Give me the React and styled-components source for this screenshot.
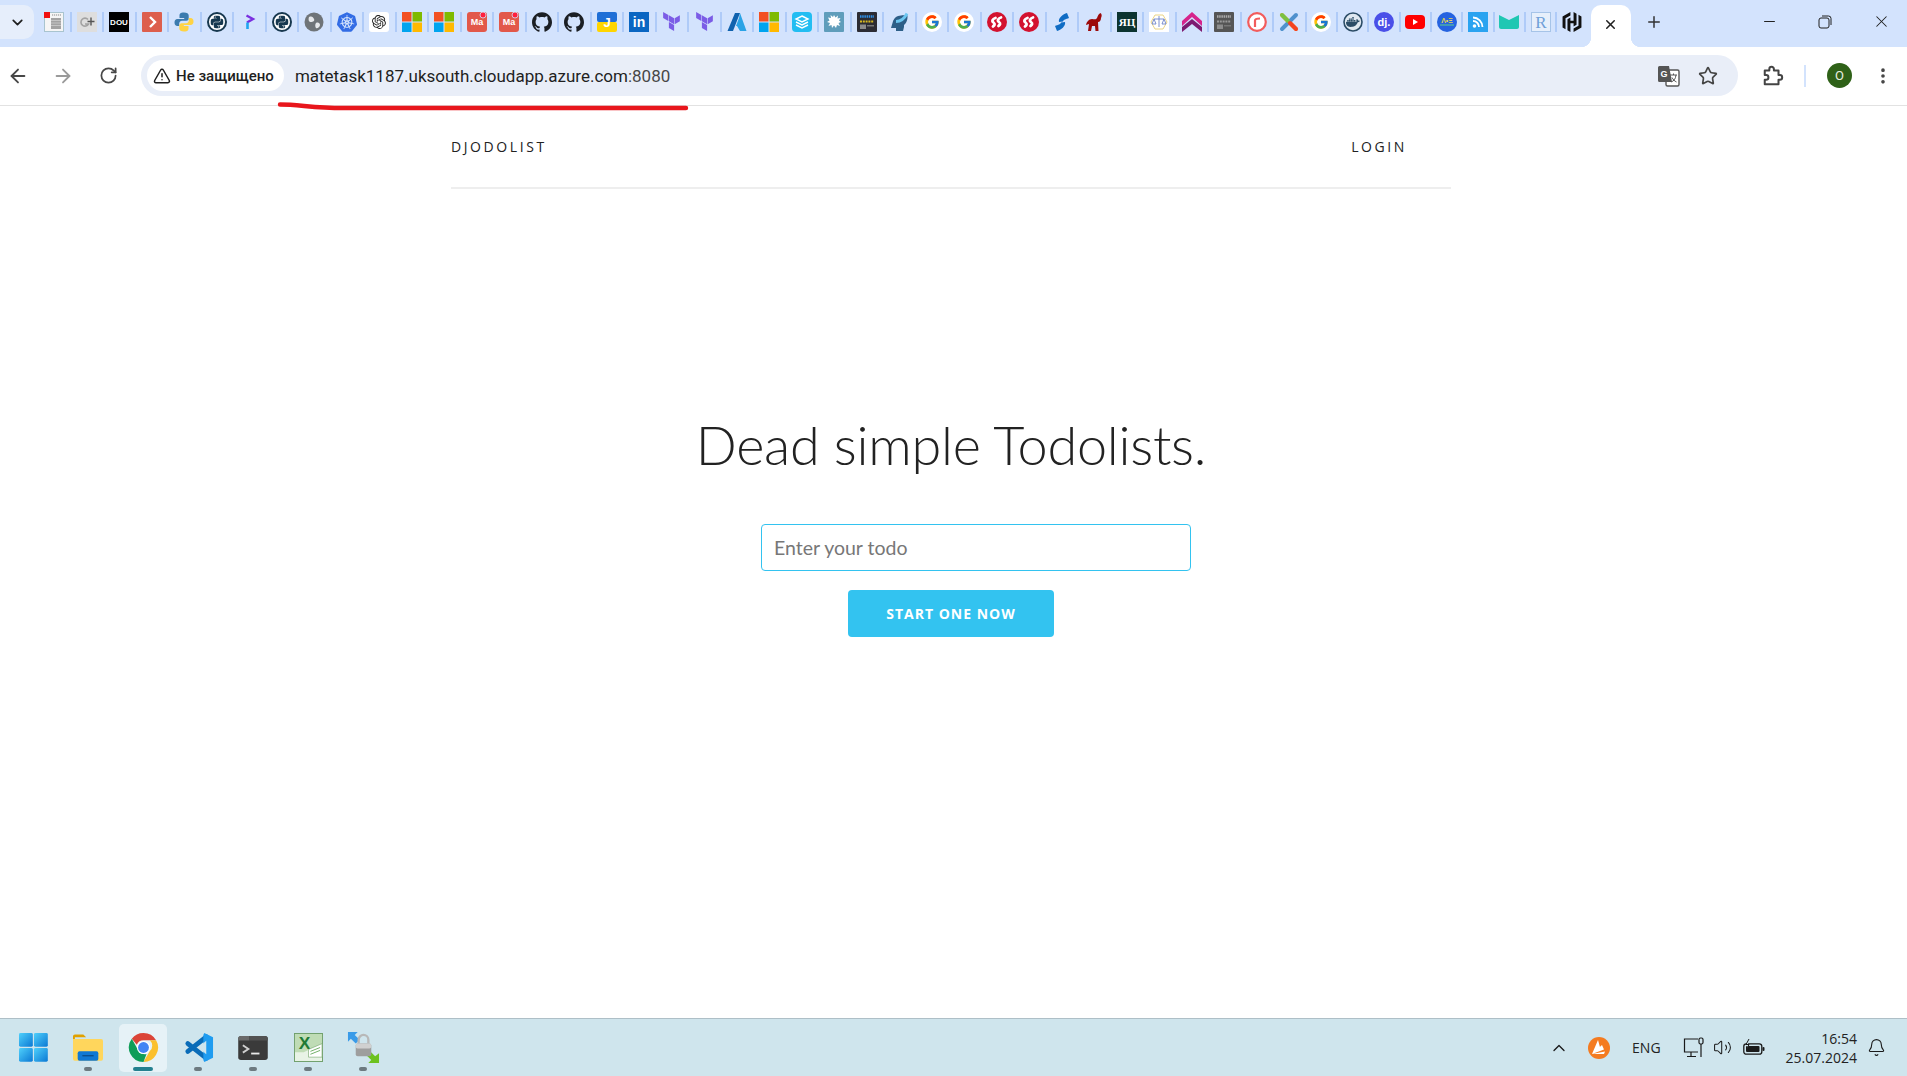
import React from 'react';
import styled, { createGlobalStyle } from 'styled-components';
import {
  ArrowLeft, ArrowRight, RotateCw, Star, EllipsisVertical, TriangleAlert,
  ChevronDown, ChevronUp, Minus, Plus, X, Volume2, Bell,
} from 'lucide-react';
import {
  SiGithub, SiKubernetes, SiOpenai, SiTerraform, SiJoomla, SiDocker, SiHashicorp, SiPython,
} from 'react-icons/si';
import { FcGoogle } from 'react-icons/fc';

const GlobalStyle = createGlobalStyle`
    html, body {
        margin: 0;
        padding: 0;
        height: 100%;
        background: #fff;
        overflow: hidden;
        font-family: 'Open Sans', 'Liberation Sans', sans-serif;
    }
    * { box-sizing: border-box; }
`;

const Page = styled.div`
    display: flex;
    flex-direction: column;
    height: 1076px;
    position: relative;
    overflow: hidden;
`;

/* tab strip */
const TabStrip = styled.div`
    display: flex;
    align-items: center;
    height: 47px;
    background: #d3e3fd;
    flex-shrink: 0;
`;

const TabSearch = styled.div`
    display: flex;
    align-items: center;
    justify-content: center;
    width: 34px;
    height: 34px;
    margin: 0 4px 3px 0;
    border-radius: 0 10px 10px 0;
    background: #e6eefb;
    color: #1f1f1f;
`;

const PinnedTab = styled.div`
    display: flex;
    align-items: center;
    justify-content: center;
    position: relative;
    width: ${({ $narrow }) => ($narrow ? '31.35px' : '32.5px')};
    height: 24px;
    margin-bottom: 4px;
    flex-shrink: 0;

    &::after {
        content: '';
        position: absolute;
        right: -1px;
        top: 2px;
        width: 2px;
        height: 20px;
        background: #afcbf8;
        display: ${({ $last }) => ($last ? 'none' : 'block')};
    }
`;

const ActiveTab = styled.div`
    display: flex;
    align-items: center;
    justify-content: center;
    position: relative;
    width: 40px;
    height: 42px;
    margin: 5px 0 0 3px;
    padding-bottom: 4px;
    background: #fff;
    border-radius: 10px 10px 0 0;
    color: #1f1f1f;

    &::before, &::after {
        content: '';
        position: absolute;
        bottom: 0;
        width: 10px;
        height: 10px;
    }
    &::before {
        left: -10px;
        background: radial-gradient(circle at 0 0, transparent 10px, #fff 10.5px);
    }
    &::after {
        right: -10px;
        background: radial-gradient(circle at 100% 0, transparent 10px, #fff 10.5px);
    }
`;

const NewTab = styled.div`
    display: flex;
    margin: 0 0 4px 14px;
    color: #333;
`;

const WindowControls = styled.div`
    display: flex;
    align-items: center;
    margin: 0 -2px 0 auto;
    color: #1f1f1f;
`;

const WindowButton = styled.div`
    display: flex;
    align-items: center;
    justify-content: center;
    width: 56px;
    height: 47px;
    padding-bottom: 4px;
`;

const RestoreIcon = () => (
  <svg width="14" height="14" viewBox="0 0 14 14" fill="none" stroke="#1f1f1f" strokeWidth="1">
    <rect x="1" y="3" width="10" height="10" rx="2" />
    <path d="M4 1h6.5A2.5 2.5 0 0 1 13 3.5V10" />
  </svg>
);

/* toolbar */
const Toolbar = styled.div`
    display: flex;
    align-items: center;
    height: 59px;
    padding: 0 0 1px 0;
    background: #fff;
    border-bottom: 1px solid #e2e2e2;
    flex-shrink: 0;
`;

const NavButtons = styled.div`
    display: flex;
    align-items: center;
    gap: 23px;
    width: 141px;
    padding-left: 7px;
    color: #474747;
`;

const ReloadIcon = styled(RotateCw)`
    margin-left: 2px;
`;

const Omnibox = styled.div`
    display: flex;
    align-items: center;
    width: 1597px;
    height: 41px;
    padding: 0 20px 0 6px;
    border-radius: 21px;
    background: #e9eef8;
`;

const SecurityChip = styled.div`
    display: flex;
    align-items: center;
    gap: 5px;
    height: 31px;
    padding: 0 10px 0 6px;
    border-radius: 16px;
    background: #fff;
    font-family: 'Roboto', sans-serif;
    font-size: 15px;
    font-weight: 500;
    color: #1f1f1f;
    white-space: nowrap;
`;

const Url = styled.div`
    margin-left: 11px;
    font-family: 'Roboto', sans-serif;
    font-size: 17px;
    color: #1f1f1f;
    white-space: nowrap;
`;

const UrlPort = styled.span`
    color: #474747;
`;

const OmniboxActions = styled.div`
    display: flex;
    align-items: center;
    gap: 18px;
    margin-left: auto;
    color: #444;
`;

const ToolbarActions = styled.div`
    display: flex;
    align-items: center;
    margin-left: 24px;
    color: #444;
`;

const ToolbarSeparator = styled.div`
    width: 2px;
    height: 22px;
    margin: 0 21px 0 20px;
    background: #d3e3fd;
`;

const Avatar = styled.div`
    display: flex;
    align-items: center;
    justify-content: center;
    width: 25px;
    height: 25px;
    margin-right: 21px;
    border-radius: 50%;
    background: #2f6118;
    color: #e8f0e0;
    font-family: 'Roboto', sans-serif;
    font-size: 13px;
`;

const ExtensionsIcon = () => (
  <svg width="22" height="22" viewBox="0 0 24 24" fill="none" stroke="#444" strokeWidth="2.2" strokeLinejoin="round">
    <path d="M3 6h5V4.500a2.500 2.500 0 0 1 5 0V6h5v5h1.500a2.500 2.500 0 0 1 0 5H18v5H3v-5h1.500a2.500 2.500 0 0 0 0-5H3z" />
  </svg>
);

/* the underline somebody drew over the screenshot */
const Annotation = styled.svg`
    position: absolute;
    left: 277px;
    top: 102px;
    pointer-events: none;
`;

/* page content */
const Main = styled.main`
    flex: 1;
    display: flex;
    flex-direction: column;
    align-items: center;
    width: 1000px;
    margin-left: 451px;
`;

const Nav = styled.nav`
    display: flex;
    justify-content: space-between;
    align-items: center;
    align-self: stretch;
    height: 83px;
    padding: 0 44px 1px 0;
    border-bottom: 2px solid #eee;
    font-family: 'Open Sans', sans-serif;
    font-size: 14px;
    font-weight: 500;
    letter-spacing: 2.6px;
    color: #222;
`;

const Headline = styled.h1`
    margin: 222px 0 0 0;
    font-family: 'Lato', sans-serif;
    font-size: 54px;
    font-weight: 300;
    line-height: 68px;
    letter-spacing: -0.27px;
    color: #222;
`;

const TodoInput = styled.input`
    width: 430px;
    height: 47px;
    margin: 45px 0 0 50px;
    padding: 0 12px;
    border: 1px solid #33c3f0;
    border-radius: 4px;
    outline: none;
    font-family: 'Lato', sans-serif;
    font-size: 19.5px;
    color: #222;

    &::placeholder {
        color: #777;
        opacity: 1;
    }
`;

const StartButton = styled.button`
    width: 206px;
    height: 47px;
    margin-top: 19px;
    border: none;
    border-radius: 4px;
    background: #33c3f0;
    font-family: 'Open Sans', sans-serif;
    font-size: 14px;
    font-weight: 700;
    letter-spacing: 1px;
    color: #fff;
`;

/* taskbar */
const Taskbar = styled.div`
    display: flex;
    align-items: center;
    height: 58px;
    padding-left: 9px;
    background: #cfe5ed;
    border-top: 1px solid #aebfc7;
    flex-shrink: 0;
`;

const TaskItem = styled.div`
    display: flex;
    align-items: center;
    justify-content: center;
    position: relative;
    width: 48px;
    height: 48px;
    margin-right: 7px;
    border-radius: 5px;
    background: ${({ $active }) => ($active ? '#e6f2f7' : 'transparent')};

    &::after {
        content: '';
        position: absolute;
        bottom: 1px;
        left: 50%;
        width: ${({ $active }) => ($active ? '20px' : '8px')};
        height: 4px;
        margin-left: ${({ $active }) => ($active ? '-10px' : '-4px')};
        border-radius: 2px;
        background: ${({ $active }) => ($active ? '#24808f' : '#6d7a80')};
        display: ${({ $running }) => ($running ? 'block' : 'none')};
    }
`;

const Tray = styled.div`
    display: flex;
    align-items: center;
    margin-left: auto;
    color: #1a1a1a;
`;

const TraySlot = styled.div`
    display: flex;
    align-items: center;
    margin-right: ${({ $gap }) => $gap}px;
`;

const Lang = styled.div`
    font-family: 'Open Sans', sans-serif;
    font-size: 14px;
    color: #222;
`;

const Clock = styled.div`
    display: flex;
    flex-direction: column;
    align-items: flex-end;
    margin-right: 10px;
    font-family: 'Open Sans', sans-serif;
    font-size: 14px;
    line-height: 19px;
    color: #222;
`;

/* favicons */
const Ms = () => (
  <svg width="20" height="20" viewBox="0 0 20 20">
    <rect width="9.5" height="9.5" fill="#f25022" /><rect x="10.5" width="9.5" height="9.5" fill="#7fba00" />
    <rect y="10.5" width="9.5" height="9.5" fill="#00a4ef" /><rect x="10.5" y="10.5" width="9.5" height="9.5" fill="#ffb900" />
  </svg>
);

const Python = () => (
  <svg width="20" height="20" viewBox="0 0 20 20">
    <circle cx="10" cy="10" r="9" fill="#fff" stroke="#17384f" strokeWidth="2" />
    <g transform="translate(3.500 3.500) scale(.54)"><SiPython size={24} color="#17384f" /></g>
  </svg>
);

const Google = () => (
  <svg width="20" height="20" viewBox="0 0 20 20">
    <circle cx="10" cy="10" r="10" fill="#fff" />
    <g transform="translate(2 2)"><FcGoogle size={16} /></g>
  </svg>
);

const LetterTile = ({ bg, color, size = 9, weight = 700, family = 'Liberation Sans', children, dot }) => (
  <svg width="20" height="20" viewBox="0 0 20 20">
    <rect width="20" height="20" rx={dot ? 3 : 0} fill={bg} />
    <text x="10" y="10" dy=".36em" textAnchor="middle" fontFamily={family} fontSize={size} fontWeight={weight} fill={color}>{children}</text>
    {dot && <circle cx="16" cy="3" r="3" fill="#ff1f3d" stroke="#d3e3fd" strokeWidth="0.8" />}
  </svg>
);

const RedS = () => (
  <svg width="20" height="20" viewBox="0 0 20 20">
    <circle cx="10" cy="10" r="10" fill="#d3122f" />
    <path d="M8.500 6C5.500 7 4.500 9 6.500 10.500S7.500 13 6 14.500" fill="none" stroke="#fff" strokeWidth="2.800" strokeLinecap="round" />
    <path d="M14 5.500C11 6.500 10 8.500 12 10s1 2.500-.5 4" fill="none" stroke="#fff" strokeWidth="2.800" strokeLinecap="round" />
  </svg>
);

const PanelTile = ({ bg, top, mid }) => (
  <svg width="20" height="20" viewBox="0 0 20 20">
    <rect width="20" height="20" rx="1" fill={bg} />
    <path d="M3 4.500h14" stroke={top} strokeWidth="2.500" strokeDasharray="1.500 .7" />
    <path d="M3 9.500h14" stroke={mid} strokeWidth="2" strokeDasharray="2 .8" />
    <rect x="3" y="12.500" width="6" height="4.500" fill="#8c8c8c" />
    <rect x="10" y="13" width="7" height="1.500" fill="#777" />
  </svg>
);

const favicons = [
  <svg key="page" width="20" height="20" viewBox="0 0 20 20">
    <rect x=".5" y=".5" width="19" height="19" fill="#f5f5f5" stroke="#a9c4cf" />
    <rect x="0" y="0" width="6" height="6" fill="#f01010" />
    <path d="M8 3h9" stroke="#8a8a8a" strokeWidth="1.200" strokeDasharray="1.200 .8" />
    <rect x="7" y="6" width="10" height="11" fill="#a3a3a3" />
    <path d="M7 8.500h10M7 11h10M7 13.500h10" stroke="#dcdcdc" strokeWidth=".6" />
  </svg>,
  <svg key="gplus" width="20" height="20" viewBox="0 0 20 20">
    <rect width="20" height="20" fill="#dedede" />
    <path d="M11 7.500a4 4 0 1 0 .5 4.500H8" fill="none" stroke="#a3a3a3" strokeWidth="1.600" />
    <path d="M14 5.500v8M10.500 9.500h7" stroke="#555" strokeWidth="1.400" />
  </svg>,
  <LetterTile key="dou" bg="#000" color="#fff" size={8}>DOU</LetterTile>,
  <svg key="next" width="20" height="20" viewBox="0 0 20 20">
    <rect width="20" height="20" rx="1" fill="#dd5f4d" />
    <path d="M8 5l5 5-5 5" fill="none" stroke="#fff" strokeWidth="2.400" />
  </svg>,
  <svg key="py" width="20" height="20" viewBox="0 0 20 20">
    <path d="M10 .5C6 .5 5.500 2 5.500 3.500V6h4.700v1H3.500C1.500 7 .5 8.500 .5 10.500S1.500 14 3.500 14h1.700v-2.500c0-1.500 1.300-2.700 2.800-2.700h4.400c1.300 0 2.300-1 2.300-2.300v-3C14.700 1.500 13 .5 10 .5z" fill="#3b7bae" />
    <path d="M10 19.500c4 0 4.500-1.500 4.500-3V14H9.800v-1h6.700c2 0 3-1.500 3-3.500S18.500 6 16.500 6h-1.700v2.500c0 1.500-1.300 2.700-2.800 2.700H7.600c-1.300 0-2.300 1-2.300 2.300v3C5.300 18.500 7 19.500 10 19.500z" fill="#ffd343" />
  </svg>,
  <Python key="py2" />,
  <svg key="p" width="20" height="20" viewBox="0 0 20 20">
    <path d="M7.500 3.500l6.500 3.500-6 3.500" fill="none" stroke="#7a2fe0" strokeWidth="2.400" />
    <path d="M8.500 10.500v6.500" stroke="#1fa6f0" strokeWidth="2.600" />
  </svg>,
  <Python key="py3" />,
  <svg key="globe" width="20" height="20" viewBox="0 0 20 20">
    <circle cx="10" cy="10" r="9.500" fill="#6f7478" />
    <path d="M5 5c3-1 4 0 5 2s-1 3-3 3-3-2-2-5zM12 11c2-1 4 0 4 2s-3 4-4 3-1-4 0-5z" fill="#e6e8ea" />
  </svg>,
  <SiKubernetes key="k8s" size={20} color="#326ce5" />,
  <svg key="openai" width="20" height="20" viewBox="0 0 20 20">
    <rect width="20" height="20" rx="3" fill="#fff" />
    <g transform="translate(3 3) scale(.58)"><SiOpenai size={24} color="#222" /></g>
  </svg>,
  <Ms key="ms1" />,
  <Ms key="ms2" />,
  <LetterTile key="ma1" bg="#e2584a" color="#fff" size={9} dot>Ma</LetterTile>,
  <LetterTile key="ma2" bg="#e2584a" color="#fff" size={9} dot>Ma</LetterTile>,
  <SiGithub key="gh1" size={20} color="#1b1f24" />,
  <SiGithub key="gh2" size={20} color="#1b1f24" />,
  <svg key="j" width="20" height="20" viewBox="0 0 20 20">
    <rect width="20" height="10" rx="2" fill="#1f6fd6" />
    <rect y="10" width="20" height="10" rx="2" fill="#ffd500" />
    <text x="10" y="15" textAnchor="middle" fontFamily="Liberation Sans" fontSize="13" fontWeight="700" fill="#fff">J</text>
  </svg>,
  <LetterTile key="in" bg="#0a66c2" color="#fff" size={14}>in</LetterTile>,
  <SiTerraform key="tf1" size={19} color="#7b5ce6" />,
  <SiTerraform key="tf2" size={19} color="#7b5ce6" />,
  <svg key="azure" width="20" height="20" viewBox="0 0 20 20">
    <path d="M8 1h5L6 19H.5z" fill="#0f62ae" /><path d="M13 1l6.500 18H13l-3-5h-1l3-8z" fill="#2aa3e6" />
  </svg>,
  <Ms key="ms3" />,
  <svg key="stack" width="20" height="20" viewBox="0 0 20 20">
    <rect width="20" height="20" rx="4" fill="#22bdf2" />
    <path d="M10 4l6 3-6 3-6-3zM4 10l6 3 6-3M4 13l6 3 6-3" fill="none" stroke="#fff" strokeWidth="1.400" />
  </svg>,
  <svg key="splat" width="20" height="20" viewBox="0 0 20 20">
    <rect width="20" height="20" rx="1" fill="#5f9dbb" />
    <path d="M10 3l1.500 2.500L14 3.500l-.5 3 3-.5-1.500 2.500 2 1.500-2.500 1 1.500 3-3-1-1 3-2-2.500-2 2.500-.5-3-3 1 1.500-3L3 10l2.500-1.500L4 5.500l3 .5-.5-3 2.500 2z" fill="#fff" />
  </svg>,
  <PanelTile key="panel1" bg="#2c2c34" top="#2f8fe8" mid="#d6b820" />,
  <svg key="head" width="20" height="20" viewBox="0 0 20 20">
    <path d="M9 4c4-1 8-1 9-1s1 7-3 10v2l-1 4H7v-3H2l1.500-5C4 8 6 5 9 4z" fill="#2d5f88" />
    <path d="M7 9.500c4 0 8.500-3 11-8" fill="none" stroke="#6cc6f0" strokeWidth="2.800" />
  </svg>,
  <Google key="g1" />,
  <Google key="g2" />,
  <RedS key="rs1" />,
  <RedS key="rs2" />,
  <svg key="bs" width="20" height="20" viewBox="0 0 20 20">
    <path d="M15 1l2 5c-3 1-6 2-6 3.500L7 10C6 6 11 2 15 1z" fill="#0f6cc4" />
    <path d="M5 19l-2-5c3-1 6-2 6-3.500l4-.5c1 4-4 8-8 9z" fill="#0f6cc4" />
  </svg>,
  <svg key="elephant" width="20" height="20" viewBox="0 0 20 20">
    <path d="M16.500 1c1.500 1 1.500 3 .5 5 0 2-1 4-3 4l.5 9h-3l-.5-5H8l-1 5H4l1-7-3 1c.5-3 3-6 6-6 2 0 4 1 5-1s1-4 3.500-5z" fill="#9c0a0a" />
  </svg>,
  <LetterTile key="yac" bg="#0c3430" color="#fff" size={11} family="Liberation Serif">ЯЦ</LetterTile>,
  <svg key="scales" width="20" height="20" viewBox="0 0 20 20">
    <rect width="20" height="20" fill="#fff" />
    <path d="M6 3h8l4 7-4 7H6l-4-7z" fill="none" stroke="#e8cf78" strokeWidth=".9" />
    <path d="M10 4v11M5 7h10M5 7l-2 5h4zM15 7l-2 5h4z" fill="none" stroke="#6d83c9" strokeWidth=".9" />
  </svg>,
  <svg key="chevrons" width="20" height="20" viewBox="0 0 20 20">
    <path d="M10 0l10 9v5L10 5 0 14V9z" fill="#d6248c" />
    <path d="M10 7l10 8v5l-10-8-10 8v-5z" fill="#7d1a70" />
  </svg>,
  <PanelTile key="panel2" bg="#555" top="#aaa" mid="#999" />,
  <svg key="r" width="20" height="20" viewBox="0 0 20 20">
    <circle cx="10" cy="10" r="8.800" fill="#fff" stroke="#f25c5c" strokeWidth="2.200" />
    <path d="M8 15V8.500C8 7 9.500 6.500 13 6.500" fill="none" stroke="#f25c5c" strokeWidth="2.200" />
  </svg>,
  <svg key="joomla" width="20" height="20" viewBox="0 0 20 20">
    <path d="M3 3l14 14" stroke="#f4a340" strokeWidth="4" strokeLinecap="round" />
    <path d="M17 3L3 17" stroke="#5091cd" strokeWidth="4" strokeLinecap="round" />
    <path d="M3 3l6 6" stroke="#7ac143" strokeWidth="4" strokeLinecap="round" />
    <path d="M11 11l6 6" stroke="#f44321" strokeWidth="4" strokeLinecap="round" />
  </svg>,
  <Google key="g3" />,
  <svg key="docker" width="20" height="20" viewBox="0 0 20 20">
    <circle cx="10" cy="10" r="9" fill="#dfe8f0" stroke="#2b4c66" strokeWidth="1.600" />
    <g transform="translate(3 3) scale(.58)"><SiDocker size={24} color="#2b4c66" /></g>
  </svg>,
  <svg key="dj" width="20" height="20" viewBox="0 0 20 20">
    <circle cx="10" cy="10" r="10" fill="#4a4fe8" />
    <text x="10" y="14" textAnchor="middle" fontFamily="Liberation Sans" fontSize="11" fontWeight="700" fill="#fff">dj.</text>
  </svg>,
  <svg key="yt" width="20" height="20" viewBox="0 0 20 20">
    <rect y="3" width="20" height="14" rx="4" fill="#f00" /><path d="M8 7l5 3-5 3z" fill="#fff" />
  </svg>,
  <svg key="az" width="20" height="20" viewBox="0 0 20 20">
    <circle cx="10" cy="10" r="10" fill="#2563e0" />
    <text x="10" y="11" textAnchor="middle" fontFamily="Liberation Sans" fontSize="7" fontWeight="700" fill="#e6d84a">Λ•Ξ</text>
    <path d="M3 13h14" stroke="#5fd08a" />
  </svg>,
  <svg key="rss" width="20" height="20" viewBox="0 0 20 20">
    <rect width="20" height="20" fill="#2aa3f0" />
    <circle cx="6.500" cy="14" r="1.800" fill="#fff" />
    <path d="M5 9a6 6 0 0 1 6 6M5 5.500A9.500 9.500 0 0 1 14.500 15" fill="none" stroke="#fff" strokeWidth="1.800" />
  </svg>,
  <svg key="book" width="20" height="20" viewBox="0 0 20 20">
    <path d="M0 3l10 5 10-5v12c0 1-1 2-2 2H2c-1 0-2-1-2-2z" fill="#20c7b3" />
  </svg>,
  <svg key="rr" width="20" height="20" viewBox="0 0 20 20">
    <rect x=".5" y=".5" width="19" height="19" fill="#e6effb" stroke="#a6c4e8" />
    <text x="10" y="16" textAnchor="middle" fontFamily="Liberation Serif" fontSize="17" fill="#6f9fd8">R</text>
  </svg>,
  <SiHashicorp key="hashi" size={20} color="#111" />,
];

/* taskbar drawings */
const WindowsLogo = () => (
  <svg width="29" height="29" viewBox="0 0 30 30">
    <defs>
      <linearGradient id="win" x1="0" y1="0" x2="1" y2="1"><stop offset="0" stopColor="#4fd0fb" /><stop offset="1" stopColor="#0a78d4" /></linearGradient>
    </defs>
    <rect width="14.300" height="14.300" rx="1.500" fill="url(#win)" />
    <rect x="15.500" width="14.300" height="14.300" rx="1.500" fill="url(#win)" />
    <rect y="15.500" width="14.300" height="14.300" rx="1.500" fill="url(#win)" />
    <rect x="15.500" y="15.500" width="14.300" height="14.300" rx="1.500" fill="url(#win)" />
  </svg>
);

const FolderIcon = () => (
  <svg width="30" height="27" viewBox="0 0 32 28">
    <path d="M0 2a2 2 0 0 1 2-2h9l3 3H2v3H0z" fill="#e0a100" />
    <path d="M0 5h30a2 2 0 0 1 2 2v19a2 2 0 0 1-2 2H2a2 2 0 0 1-2-2z" fill="#ffd65c" />
    <rect x="5" y="18" width="22" height="10" rx="2" fill="#0f78d4" />
    <rect x="10" y="22" width="12" height="1.500" fill="#0a4f8f" />
  </svg>
);

const ChromeIcon = () => (
  <svg width="31" height="31" viewBox="0 0 32 32">
    <path d="M16 1a15 15 0 0 1 13 7.500H16a7.500 7.500 0 0 0-6.900 4.600L3.900 7A15 15 0 0 1 16 1z" fill="#db4437" />
    <path d="M29 8.500A15 15 0 0 1 16 31l6.500-11.300a7.500 7.500 0 0 0 0-11.200z" fill="#fbc02d" />
    <path d="M16 31A15 15 0 0 1 3.900 7l6.500 11.500a7.500 7.500 0 0 0 8.700 4.300z" fill="#0f9d58" />
    <circle cx="16" cy="16" r="6.800" fill="#fff" /><circle cx="16" cy="16" r="5.600" fill="#4285f4" />
  </svg>
);

const CodeIcon = () => (
  <svg width="31" height="31" viewBox="0 0 32 32">
    <path d="M24 5L5 20M5 12l19 15" stroke="#0a6cb8" strokeWidth="5" strokeLinecap="round" fill="none" />
    <path d="M22 1l9 4.500v21L22 31l-1-2V3z" fill="#1f9cf0" />
    <path d="M24 9v14l-8-7z" fill="#cfe5ed" />
  </svg>
);

const TerminalIcon = () => (
  <svg width="30" height="24" viewBox="0 0 32 26">
    <rect width="32" height="26" rx="3" fill="#3a3a3a" />
    <path d="M0 3a3 3 0 0 1 3-3h9v5H0z" fill="#6a6a6a" />
    <path d="M12 0h17a3 3 0 0 1 3 3v2H12z" fill="#525252" />
    <path d="M5 10l6 4-6 4" fill="none" stroke="#d0d0d0" strokeWidth="2" />
    <path d="M14 19h9" stroke="#e8e8e8" strokeWidth="2" />
  </svg>
);

const ExcelIcon = () => (
  <svg width="29" height="29" viewBox="0 0 30 30">
    <rect width="29" height="29" x=".5" y=".5" fill="#e8f3e6" stroke="#6f9e6a" />
    <path d="M1 1h28v10L10 20H1z" fill="#bfdcb5" />
    <text x="11" y="17" textAnchor="middle" fontFamily="Liberation Sans" fontSize="18" fontWeight="700" fill="#1e7a35">X</text>
    <path d="M15 17l14-6v14H15z" fill="#fff" stroke="#7fae78" strokeWidth=".7" />
    <path d="M17 19l10-4M17 22l10-4" stroke="#6fae66" strokeWidth="1" />
  </svg>
);

const VpnLockIcon = () => (
  <svg width="33" height="33" viewBox="0 0 34 34">
    <path d="M1 1h10L8 4l5 5-4 4-5-5-3 3z" fill="#3a9be8" />
    <path d="M33 33H22l3-3-5-5 4-4 5 5 4-3z" fill="#6cc21f" />
    <path d="M12 13V9a5 5 0 0 1 10 0v4" fill="none" stroke="#b8b8b8" strokeWidth="2.400" />
    <rect x="9" y="13" width="16" height="13" rx="2" fill="#9e9e9e" />
    <rect x="9" y="13" width="16" height="5" rx="2" fill="#d0d0d0" />
  </svg>
);

const TrayBadge = () => (
  <svg width="22" height="22" viewBox="0 0 22 22">
    <circle cx="11" cy="11" r="11" fill="#f47b20" />
    <path d="M4 17L10 3l2.500 9zM4 17l10-9 2 4.500zM4 17l13-2.500-1 2.500z" fill="#fff" />
  </svg>
);

const NetworkIcon = () => (
  <svg width="22" height="22" viewBox="0 0 22 22" fill="none" stroke="#1a1a1a" strokeWidth="1.200">
    <path d="M15 2H1.500v13H15M8 15v4M4 19.500h9" />
    <rect x="16" y="1" width="4" height="6" rx="1.500" />
    <path d="M18 7v13" />
  </svg>
);

const BatteryIcon = () => (
  <svg width="22" height="18" viewBox="0 0 22 18">
    <rect x=".8" y="4.800" width="18" height="10.400" rx="2.500" fill="none" stroke="#1a1a1a" strokeWidth="1.300" />
    <rect x="3" y="7" width="13.500" height="6" rx="1" fill="#1a1a1a" />
    <rect x="19.500" y="8" width="2" height="4" rx="1" fill="#1a1a1a" />
    <path d="M6 0L3 5.500h3L4 10" fill="#cfe5ed" stroke="#1a1a1a" strokeWidth="1" />
  </svg>
);

const TranslateIcon = () => (
  <svg width="22" height="22" viewBox="0 0 22 22">
    <rect x="8" y="5" width="13" height="16" rx="1.500" fill="#fff" stroke="#555" strokeWidth="1.400" />
    <path d="M1.500 1H11l3 16H1.500A1.500 1.500 0 0 1 0 15.500v-13A1.500 1.500 0 0 1 1.500 1z" fill="#555" />
    <text x="6" y="12" textAnchor="middle" fontFamily="Liberation Sans" fontSize="9" fontWeight="700" fill="#fff">G</text>
    <path d="M12 10h7M15.500 8.500v1.500M13 17c3-1 4.500-3 5-7M14 12.500c1 2 2.500 3.500 4.500 4.500" fill="none" stroke="#555" strokeWidth="1" />
  </svg>
);

const App = () => (
  <Page>
    <GlobalStyle />
    <TabStrip>
      <TabSearch><ChevronDown size={17} strokeWidth={2.4} /></TabSearch>
      {favicons.map((icon, i) => (
        <PinnedTab key={icon.key} $narrow={i >= 39} $last={i === favicons.length - 1}>{icon}</PinnedTab>
      ))}
      <ActiveTab><X size={15} strokeWidth={2.4} /></ActiveTab>
      <NewTab><Plus size={18} strokeWidth={2} /></NewTab>
      <WindowControls>
        <WindowButton><Minus size={17} strokeWidth={1.4} /></WindowButton>
        <WindowButton><RestoreIcon /></WindowButton>
        <WindowButton><X size={19} strokeWidth={1.3} /></WindowButton>
      </WindowControls>
    </TabStrip>

    <Toolbar>
      <NavButtons>
        <ArrowLeft size={22} strokeWidth={2} />
        <ArrowRight size={22} strokeWidth={2} color="#9a9a9a" />
        <ReloadIcon size={19} strokeWidth={2.2} />
      </NavButtons>
      <Omnibox>
        <SecurityChip><TriangleAlert size={18} strokeWidth={2} />Не защищено</SecurityChip>
        <Url>matetask1187.uksouth.cloudapp.azure.com<UrlPort>:8080</UrlPort></Url>
        <OmniboxActions>
          <TranslateIcon />
          <Star size={20} strokeWidth={2} />
        </OmniboxActions>
      </Omnibox>
      <ToolbarActions>
        <ExtensionsIcon />
        <ToolbarSeparator />
        <Avatar>O</Avatar>
        <EllipsisVertical size={20} strokeWidth={2.4} />
      </ToolbarActions>
    </Toolbar>

    <Annotation width="416" height="10" viewBox="0 0 416 10">
      <path d="M3 2.500C22 2.500 36 6 66 6H409" fill="none" stroke="#e8161c" strokeWidth="4.400" strokeLinecap="round" />
    </Annotation>

    <Main>
      <Nav>
        <span>DJODOLIST</span>
        <span>LOGIN</span>
      </Nav>
      <Headline>Dead simple Todolists.</Headline>
      <TodoInput placeholder="Enter your todo" readOnly />
      <StartButton>START ONE NOW</StartButton>
    </Main>

    <Taskbar>
      <TaskItem><WindowsLogo /></TaskItem>
      <TaskItem $running><FolderIcon /></TaskItem>
      <TaskItem $running $active><ChromeIcon /></TaskItem>
      <TaskItem $running><CodeIcon /></TaskItem>
      <TaskItem $running><TerminalIcon /></TaskItem>
      <TaskItem $running><ExcelIcon /></TaskItem>
      <TaskItem $running><VpnLockIcon /></TaskItem>
      <Tray>
        <TraySlot $gap={19}><ChevronUp size={20} strokeWidth={1.6} /></TraySlot>
        <TraySlot $gap={22}><TrayBadge /></TraySlot>
        <TraySlot $gap={22}><Lang>ENG</Lang></TraySlot>
        <TraySlot $gap={8}><NetworkIcon /></TraySlot>
        <TraySlot $gap={11}><Volume2 size={19} strokeWidth={1.3} /></TraySlot>
        <TraySlot $gap={21}><BatteryIcon /></TraySlot>
        <Clock><span>16:54</span><span>25.07.2024</span></Clock>
        <TraySlot $gap={21}><Bell size={19} strokeWidth={1.4} /></TraySlot>
      </Tray>
    </Taskbar>
  </Page>
);

export default App;
